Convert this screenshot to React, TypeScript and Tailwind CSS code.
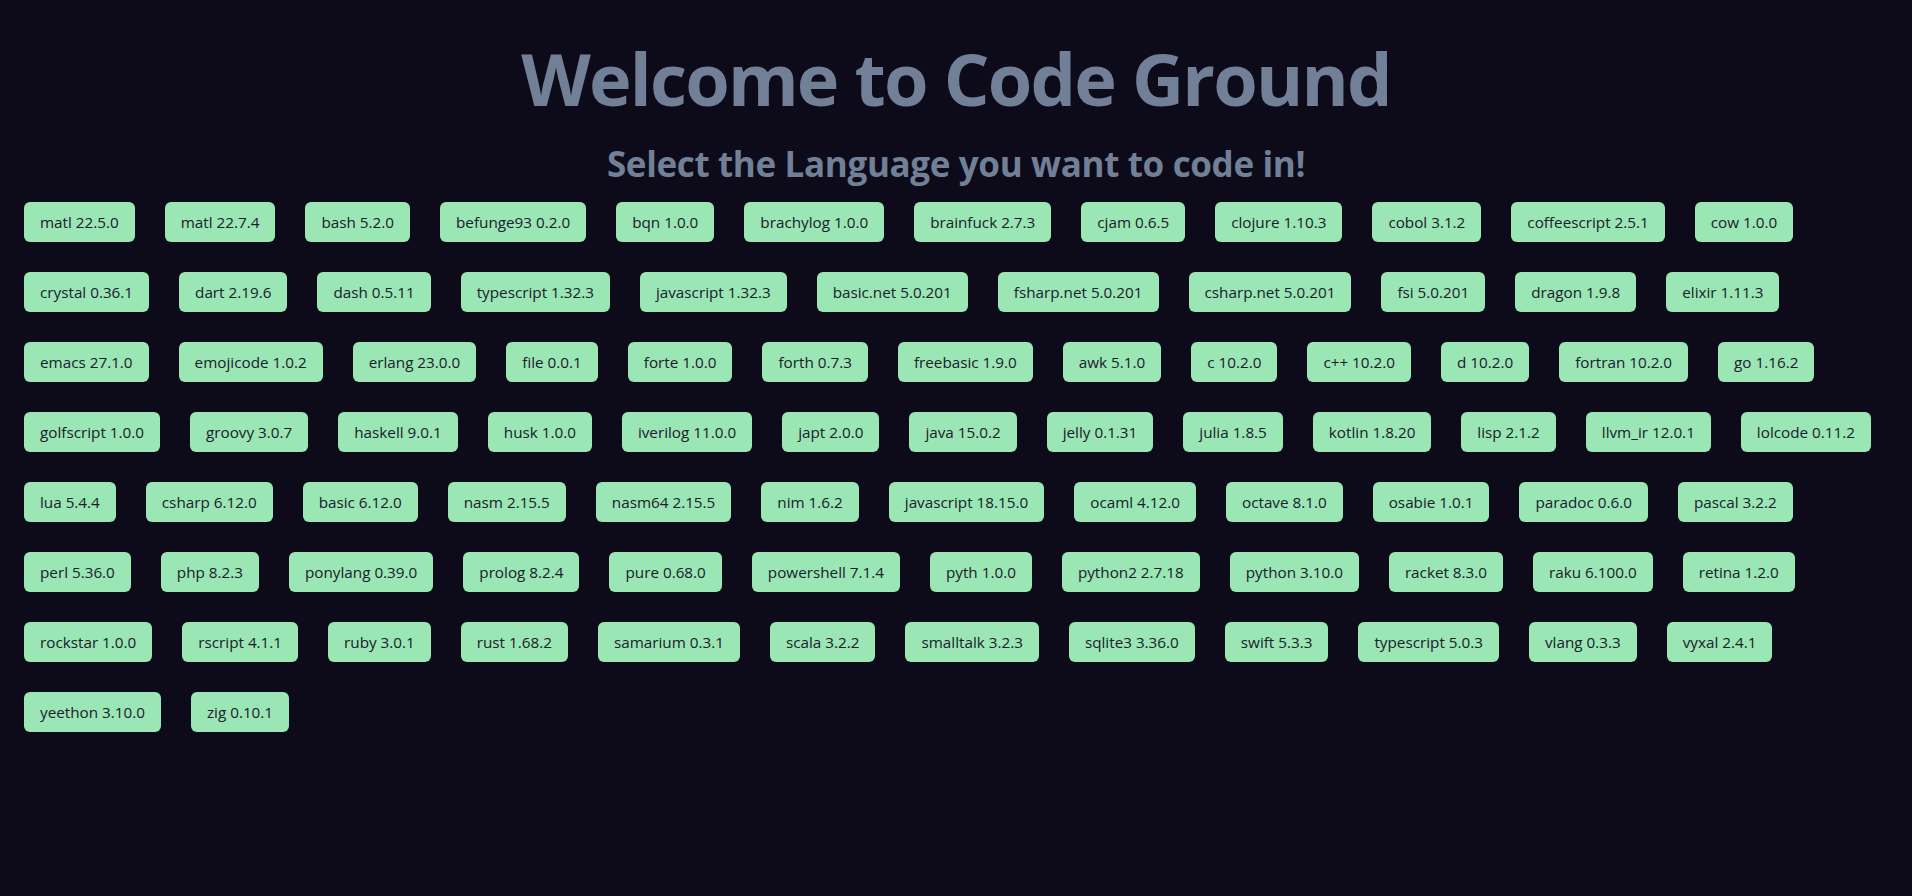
import React from "react";

const rows: string[][] = [
  ["matl 22.5.0", "matl 22.7.4", "bash 5.2.0", "befunge93 0.2.0", "bqn 1.0.0", "brachylog 1.0.0", "brainfuck 2.7.3", "cjam 0.6.5", "clojure 1.10.3", "cobol 3.1.2", "coffeescript 2.5.1", "cow 1.0.0"],
  ["crystal 0.36.1", "dart 2.19.6", "dash 0.5.11", "typescript 1.32.3", "javascript 1.32.3", "basic.net 5.0.201", "fsharp.net 5.0.201", "csharp.net 5.0.201", "fsi 5.0.201", "dragon 1.9.8", "elixir 1.11.3"],
  ["emacs 27.1.0", "emojicode 1.0.2", "erlang 23.0.0", "file 0.0.1", "forte 1.0.0", "forth 0.7.3", "freebasic 1.9.0", "awk 5.1.0", "c 10.2.0", "c++ 10.2.0", "d 10.2.0", "fortran 10.2.0", "go 1.16.2"],
  ["golfscript 1.0.0", "groovy 3.0.7", "haskell 9.0.1", "husk 1.0.0", "iverilog 11.0.0", "japt 2.0.0", "java 15.0.2", "jelly 0.1.31", "julia 1.8.5", "kotlin 1.8.20", "lisp 2.1.2", "llvm_ir 12.0.1", "lolcode 0.11.2"],
  ["lua 5.4.4", "csharp 6.12.0", "basic 6.12.0", "nasm 2.15.5", "nasm64 2.15.5", "nim 1.6.2", "javascript 18.15.0", "ocaml 4.12.0", "octave 8.1.0", "osabie 1.0.1", "paradoc 0.6.0", "pascal 3.2.2"],
  ["perl 5.36.0", "php 8.2.3", "ponylang 0.39.0", "prolog 8.2.4", "pure 0.68.0", "powershell 7.1.4", "pyth 1.0.0", "python2 2.7.18", "python 3.10.0", "racket 8.3.0", "raku 6.100.0", "retina 1.2.0"],
  ["rockstar 1.0.0", "rscript 4.1.1", "ruby 3.0.1", "rust 1.68.2", "samarium 0.3.1", "scala 3.2.2", "smalltalk 3.2.3", "sqlite3 3.36.0", "swift 5.3.3", "typescript 5.0.3", "vlang 0.3.3", "vyxal 2.4.1"],
  ["yeethon 3.10.0", "zig 0.10.1"],
];

export default function App() {
  return (
    <div
      className="min-h-screen w-full bg-[#0d0b1a] pb-10"
      style={{ fontFamily: '"Open Sans", "Noto Sans", sans-serif' }}
    >
      <h1 className="pt-[42px] text-center text-[72px] font-bold leading-none tracking-[-0.025em] text-[#718096]">
        Welcome to Code Ground
      </h1>
      <h2 className="mt-[29px] text-center text-[35px] font-bold leading-[1.2] tracking-[-0.01em] text-[#718096]">
        Select the Language you want to code in!
      </h2>
      <div className="mt-[17px] flex flex-col gap-[30px] px-[24px]">
        {rows.map((row, i) => (
          <div key={i} className="flex gap-[30px]">
            {row.map((lang) => (
              <button
                key={lang}
                className="h-10 whitespace-nowrap rounded-md bg-[#9ae6b4] px-4 text-[15.25px] font-medium text-[#1a202c]"
              >
                {lang}
              </button>
            ))}
          </div>
        ))}
      </div>
    </div>
  );
}
